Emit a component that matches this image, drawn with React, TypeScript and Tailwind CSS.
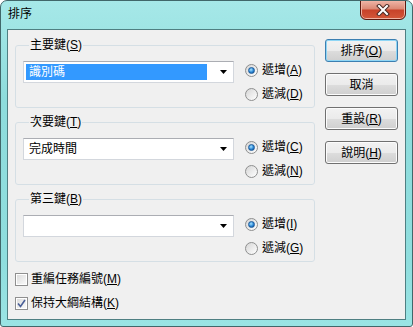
import React from 'react';

const font = "font-['Liberation_Sans','Noto_Sans_CJK_TC',sans-serif] text-[12px] leading-[14px] text-black";

const Acc = ({ text, k }: { text: string; k: string }) => (
  <span className="whitespace-nowrap">
    {text}(<span className="underline underline-offset-[1px]">{k}</span>)
  </span>
);

const Radio = ({ checked, text, k }: { checked?: boolean; text: string; k: string }) => (
  <div className="flex items-center h-[14px]">
    <div className="w-[13px] h-[13px] rounded-full border border-[#8e8f8f] bg-[linear-gradient(135deg,#d6d6d6,#ffffff)] flex items-center justify-center">
      {checked && (
        <div className="w-[7px] h-[7px] rounded-full bg-[radial-gradient(circle_at_40%_35%,#a8e4ff,#2a86d6_55%,#0d3f7a)] border border-[#1e5b9a]" />
      )}
    </div>
    <span className="ml-[4px]">
      <Acc text={text} k={k} />
    </span>
  </div>
);

const Combo = ({ value, focused }: { value?: string; focused?: boolean }) => (
  <div className="w-[211px] h-[22px] bg-white border border-[#d3d7dd] border-t-[#abadb3] flex items-center pr-[6px]">
    <div className="flex-1 h-full p-[2px] flex">
      {focused ? (
        <div className="flex-1 bg-[#3399ff] text-white flex items-center pl-[3px] mr-[11px]">{value}</div>
      ) : (
        <div className="flex-1 flex items-center pl-[3px]">{value}</div>
      )}
    </div>
    <svg width="7" height="4" viewBox="0 0 7 4">
      <path d="M0 0h7L3.5 4z" fill="#000" />
    </svg>
  </div>
);

const Group = ({
  label,
  k,
  value,
  focused,
  up,
  down,
}: {
  label: string;
  k: string;
  value?: string;
  focused?: boolean;
  up: [string, string];
  down: [string, string];
}) => (
  <fieldset className="border border-[#d5dfe5] rounded-[3px] pl-[7px] pt-[9px] pb-[6px]">
    <legend className="ml-[6px] px-[1px]">
      <Acc text={label} k={k} />
    </legend>
    <div className="flex items-start">
      <Combo value={value} focused={focused} />
      <div className="ml-[11px] mt-[2px] flex flex-col gap-[10px]">
        <Radio checked text={up[0]} k={up[1]} />
        <Radio text={down[0]} k={down[1]} />
      </div>
    </div>
  </fieldset>
);

const Check = ({ checked, text, k }: { checked?: boolean; text: string; k: string }) => (
  <div className="flex items-center h-[14px]">
    <div className="w-[13px] h-[13px] border border-[#8f8f8f] bg-white p-[1px]">
      <div className="w-full h-full bg-[linear-gradient(135deg,#dcdcdc,#f9f9f9)] flex items-center justify-center">
        {checked && (
          <svg width="9" height="9" viewBox="0 0 9 9">
            <path d="M1 4.5l2.5 3L8 1" fill="none" stroke="#4a5f97" strokeWidth="1.6" />
          </svg>
        )}
      </div>
    </div>
    <span className="ml-[3px]">
      <Acc text={text} k={k} />
    </span>
  </div>
);

const Button = ({ children, primary }: { children: React.ReactNode; primary?: boolean }) => (
  <div
    className={
      'w-[73px] h-[23px] rounded-[3px] border flex items-center justify-center bg-[linear-gradient(#f2f2f2_0%,#ebebeb_50%,#dddddd_51%,#cfcfcf_100%)] ' +
      (primary
        ? 'border-[#3c7fb1] shadow-[inset_0_0_0_1px_#8fd6f5]'
        : 'border-[#707070] shadow-[inset_0_0_0_1px_#fcfcfc]')
    }
  >
    {children}
  </div>
);

export default function App() {
  return (
    <div className={'w-[413px] h-[327px] ' + font}>
      <div className="w-full h-full flex flex-col rounded-t-[7px] rounded-b-[3px] border border-[#41676a] bg-[linear-gradient(180deg,#a6e8e8_0%,#8edcdc_30%,#8fdede_80%,#9ae4e4_100%)] overflow-hidden">
        {/* Title bar */}
        <div className="h-[28px] flex items-start justify-between">
          <div className="pl-[7px] pt-[6px]">排序</div>
          <div className="mr-[6px] -mt-px w-[46px] h-[20px] rounded-b-[6px] border border-[#5a1a10] bg-[linear-gradient(#eeb4a6_0%,#dc8a76_42%,#c8432a_52%,#d4583a_100%)] shadow-[inset_0_0_0_1px_#f0b3a3] flex items-center justify-center">
            <svg width="14" height="12" viewBox="0 0 14 12">
              <path d="M3 2l8 8M11 2l-8 8" stroke="#4b2a25" strokeWidth="4" strokeLinecap="square" />
              <path d="M3 2l8 8M11 2l-8 8" stroke="#ffffff" strokeWidth="2" strokeLinecap="square" />
            </svg>
          </div>
        </div>

        {/* Client area */}
        <div className="mx-[6px] mb-[6px] flex-1 border border-[#4f7f82] bg-[#f0f0f0] flex pl-[7px]">
          <div className="w-[300px] pt-[8px] flex flex-col">
            <div className="flex flex-col gap-[7px]">
              <Group label="主要鍵" k="S" value="識別碼" focused up={['遞增', 'A']} down={['遞減', 'D']} />
              <Group label="次要鍵" k="T" value="完成時間" up={['遞增', 'C']} down={['遞減', 'N']} />
              <Group label="第三鍵" k="B" up={['遞增', 'I']} down={['遞減', 'G']} />
            </div>
            <div className="mt-[10px] flex flex-col gap-[10px]">
              <Check text="重編任務編號" k="M" />
              <Check checked text="保持大綱結構" k="K" />
            </div>
          </div>
          <div className="ml-[10px] pt-[9px] flex flex-col gap-[11px]">
            <Button primary>
              <Acc text="排序" k="O" />
            </Button>
            <Button>取消</Button>
            <Button>
              <Acc text="重設" k="R" />
            </Button>
            <Button>
              <Acc text="說明" k="H" />
            </Button>
          </div>
        </div>
      </div>
    </div>
  );
}
